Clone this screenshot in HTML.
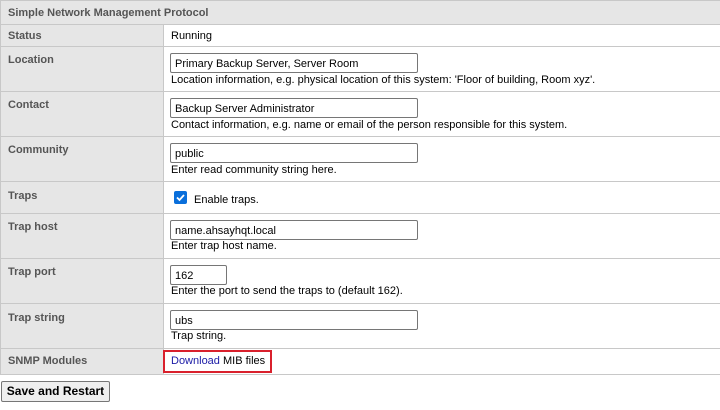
<!DOCTYPE html>
<html><head><meta charset="utf-8"><style>
*{margin:0;padding:0;box-sizing:border-box}
body{width:720px;height:410px;background:#fff;position:relative;overflow:hidden;font-family:"Liberation Sans",Tahoma,sans-serif;font-size:11px;color:#000}
.hl{position:absolute;left:0;width:720px;height:1px;background:#c8c8c8}
.lab{position:absolute;left:1px;width:162px;background:#e6e6e6}
.vl{position:absolute;left:163px;width:1px;background:#c8c8c8}
.t{position:absolute;white-space:nowrap}
.b{font-weight:bold;color:#555;left:8px}
.in{position:absolute;left:170px;height:20px;border:1px solid #767676;border-radius:2px;background:#fff;padding:4px 0 0 4px;white-space:nowrap;line-height:12px}
</style></head><body>
<div style="position:absolute;left:0;top:0;width:720px;height:24px;background:#e6e6e6"></div>
<div style="position:absolute;left:0;top:0;width:1px;height:374px;background:#c8c8c8"></div>
<div class="lab" style="top:25px;height:349px"></div>
<div class="vl" style="top:25px;height:349px"></div>
<div class="hl" style="top:0"></div><div class="hl" style="top:24px"></div><div class="hl" style="top:46px"></div><div class="hl" style="top:91px"></div><div class="hl" style="top:136px"></div><div class="hl" style="top:181px"></div><div class="hl" style="top:213px"></div><div class="hl" style="top:258px"></div><div class="hl" style="top:303px"></div><div class="hl" style="top:348px"></div><div class="hl" style="top:374px"></div>
<div class="t b" style="top:7px">Simple Network Management Protocol</div>
<div class="t b" style="top:30px">Status</div><div class="t" style="left:171px;top:30px">Running</div>
<div class="t b" style="top:54px">Location</div>
<div class="in" style="top:53px;width:248px">Primary Backup Server, Server Room</div>
<div class="t" style="left:171px;top:74px">Location information, e.g. physical location of this system: 'Floor of building, Room xyz'.</div>
<div class="t b" style="top:99px">Contact</div>
<div class="in" style="top:98px;width:248px">Backup Server Administrator</div>
<div class="t" style="left:171px;top:119px">Contact information, e.g. name or email of the person responsible for this system.</div>
<div class="t b" style="top:144px">Community</div>
<div class="in" style="top:143px;width:248px">public</div>
<div class="t" style="left:171px;top:164px">Enter read community string here.</div>
<div class="t b" style="top:190px">Traps</div>
<div style="position:absolute;left:174px;top:191px;width:13px;height:13px;background:#0a6fdb;border-radius:2px"><svg width="13" height="13" viewBox="0 0 13 13"><path d="M3 6.5l2.5 2.5 4.5-5" stroke="#fff" stroke-width="1.8" fill="none"/></svg></div>
<div class="t" style="left:194px;top:194px">Enable traps.</div>
<div class="t b" style="top:221px">Trap host</div>
<div class="in" style="top:220px;width:248px">name.ahsayhqt.local</div>
<div class="t" style="left:171px;top:240px">Enter trap host name.</div>
<div class="t b" style="top:266px">Trap port</div>
<div class="in" style="top:265px;width:57px">162</div>
<div class="t" style="left:171px;top:285px">Enter the port to send the traps to (default 162).</div>
<div class="t b" style="top:312px">Trap string</div>
<div class="in" style="top:310px;width:248px">ubs</div>
<div class="t" style="left:171px;top:330px">Trap string.</div>
<div class="t b" style="top:355px">SNMP Modules</div>
<div style="position:absolute;left:163px;top:350px;width:109px;height:23px;border:2px solid #d9202c"></div>
<div class="t" style="left:171px;top:355px"><span style="color:#1a1aa6">Download</span> MIB files</div>
<div style="position:absolute;left:1px;top:381px;width:109px;height:21px;border:1px solid #767676;border-radius:2px;background:#efefef;font-weight:bold;font-size:12px;text-align:center;line-height:19px">Save and Restart</div>
</body></html>
